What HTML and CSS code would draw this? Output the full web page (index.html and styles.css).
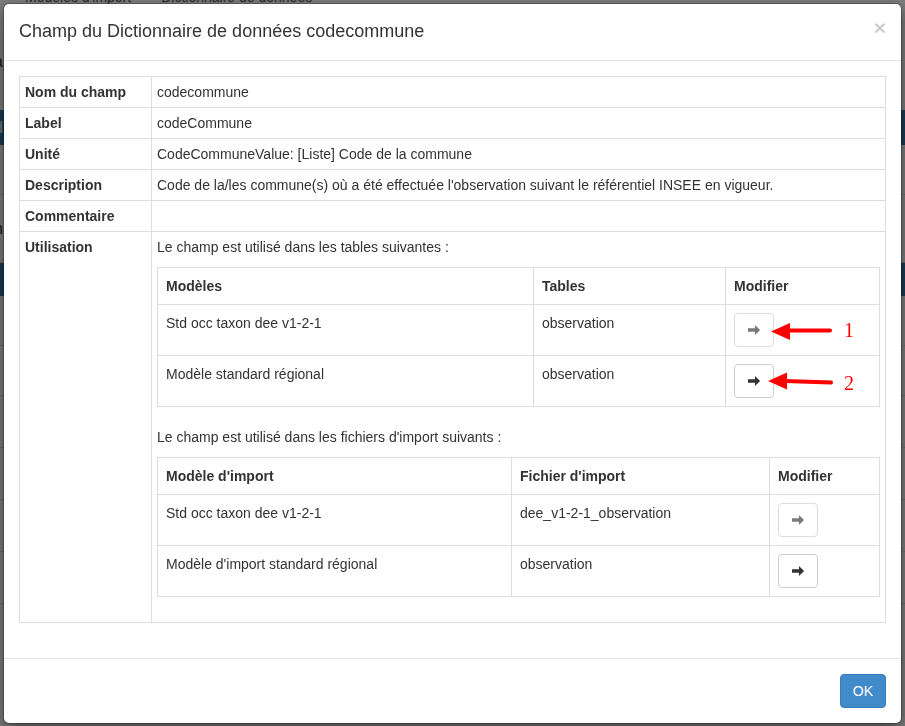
FILE: index.html
```html
<!DOCTYPE html>
<html lang="fr">
<head>
<meta charset="utf-8">
<title>Champ du Dictionnaire de données</title>
<link rel="stylesheet" href="styles.css">
</head>
<body>
<div class="page">
  <ul class="tabs">
    <li>Modèles d'import</li>
    <li>Dictionnaire de données</li>
  </ul>
  <div class="pg-row r1">a</div>
  <div class="pg-gap"></div>
  <div class="pg-bar">d</div>
  <div class="pg-row r2">/</div>
  <div class="pg-row r3">n</div>
  <div class="pg-bar b2"></div>
  <div class="pg-row r4"></div>
  <div class="pg-row r5"></div>
  <div class="pg-row r6">t</div>
  <div class="pg-row r7"></div>
  <div class="pg-row r7"></div>
  <div class="pg-row r7"></div>
</div>
<div class="backdrop"></div>

<div class="modal">
  <div class="modal-header">
    <span class="close">×</span>
    <h4 class="modal-title">Champ du Dictionnaire de données codecommune</h4>
  </div>
  <div class="modal-body">
    <table class="tbl tbl-main">
      <colgroup><col class="c-label"><col></colgroup>
      <tbody>
        <tr><th>Nom du champ</th><td>codecommune</td></tr>
        <tr><th>Label</th><td>codeCommune</td></tr>
        <tr><th>Unité</th><td>CodeCommuneValue: [Liste] Code de la commune</td></tr>
        <tr><th>Description</th><td>Code de la/les commune(s) où a été effectuée l'observation suivant le référentiel INSEE en vigueur.</td></tr>
        <tr><th>Commentaire</th><td></td></tr>
        <tr>
          <th>Utilisation</th>
          <td>
            <p class="intro">Le champ est utilisé dans les tables suivantes :</p>
            <table class="tbl tbl-sub">
              <colgroup><col class="c-m1"><col class="c-t1"><col></colgroup>
              <tbody>
                <tr class="head"><th>Modèles</th><th>Tables</th><th>Modifier</th></tr>
                <tr><td>Std occ taxon dee v1-2-1</td><td>observation</td><td><button class="btn" disabled><svg class="ico" viewBox="0 0 14 12"><path d="M0 4h7.5V0.5L13 6l-5.5 5.5V8H0z"/></svg></button></td></tr>
                <tr><td>Modèle standard régional</td><td>observation</td><td><button class="btn"><svg class="ico" viewBox="0 0 14 12"><path d="M0 4h7.5V0.5L13 6l-5.5 5.5V8H0z"/></svg></button></td></tr>
              </tbody>
            </table>
            <p class="intro">Le champ est utilisé dans les fichiers d'import suivants :</p>
            <table class="tbl tbl-sub">
              <colgroup><col class="c-m2"><col class="c-t2"><col></colgroup>
              <tbody>
                <tr class="head"><th>Modèle d'import</th><th>Fichier d'import</th><th>Modifier</th></tr>
                <tr><td>Std occ taxon dee v1-2-1</td><td>dee_v1-2-1_observation</td><td><button class="btn" disabled><svg class="ico" viewBox="0 0 14 12"><path d="M0 4h7.5V0.5L13 6l-5.5 5.5V8H0z"/></svg></button></td></tr>
                <tr><td>Modèle d'import standard régional</td><td>observation</td><td><button class="btn"><svg class="ico" viewBox="0 0 14 12"><path d="M0 4h7.5V0.5L13 6l-5.5 5.5V8H0z"/></svg></button></td></tr>
              </tbody>
            </table>
          </td>
        </tr>
      </tbody>
    </table>
  </div>
  <div class="modal-footer">
    <button class="btn-primary">OK</button>
  </div>
</div>

<svg class="annot" width="905" height="726" viewBox="0 0 905 726">
  <line x1="789" y1="330.5" x2="830" y2="330.5" stroke="#f00" stroke-width="4" stroke-linecap="round"/>
  <polygon points="771,331.5 790,323 790,340" fill="#f00"/>
  <line x1="785" y1="381" x2="831" y2="382.5" stroke="#f00" stroke-width="4" stroke-linecap="round"/>
  <polygon points="768,381 787,372.5 787,389.5" fill="#f00"/>
  <text x="844" y="337" class="num">1</text>
  <text x="844" y="390" class="num">2</text>
</svg>
</body>
</html>
```

FILE: styles.css
```css
* { box-sizing: border-box; }

html, body {
  margin: 0;
  padding: 0;
  width: 905px;
  height: 726px;
  overflow: hidden;
}

body {
  font-family: "Liberation Sans", Arial, sans-serif;
  font-size: 14px;
  line-height: 1.42857;
  color: #333;
  background: #fff;
}

/* background page (dimmed by the backdrop) */
.tabs {
  list-style: none;
  margin: -12px 0 0 0;
  padding: 0 0 0 25px;
  display: flex;
  gap: 30px;
  font-size: 14px;
  color: #555;
  height: 52px;
}
.pg-row {
  border-bottom: 1px solid #ddd;
  font-size: 16px;
  margin-left: -6px;
  color: #333;
}
.r1 { height: 40px; line-height: 44px; border-bottom: 0; }
.pg-gap { height: 30px; }
.pg-bar {
  height: 35px;
  background: #337ab7;
  color: #fff;
  font-size: 16px;
  line-height: 35px;
  margin-left: -6px;
}
.r2 { height: 50px; line-height: 54px; }
.r3 { height: 68px; line-height: 68px; }
.b2 { height: 33px; }
.r4 { height: 50px; }
.r5 { height: 50px; }
.r6 { height: 52px; line-height: 34px; }
.r7 { height: 52px; }

.backdrop {
  position: fixed;
  inset: 0;
  background: rgba(0, 0, 0, 0.5);
}

/* modal */
.modal {
  position: absolute;
  left: 3px;
  top: 3px;
  width: 899px;
  background: #fff;
  border: 1px solid rgba(0, 0, 0, 0.2);
  border-radius: 6px;
  box-shadow: 0 5px 15px rgba(0, 0, 0, 0.5);
  background-clip: padding-box;
}

.modal-header {
  padding: 15px;
  border-bottom: 1px solid #e5e5e5;
}
.modal-title {
  margin: 0;
  font-size: 18px;
  font-weight: normal;
  line-height: 1.42857;
  color: #333;
}
.close {
  float: right;
  font-size: 21px;
  font-weight: bold;
  line-height: 1;
  color: #000;
  opacity: 0.2;
  margin-top: -2px;
}

.modal-body {
  padding: 15px;
}

.tbl {
  width: 100%;
  border-collapse: collapse;
  border-spacing: 0;
  table-layout: fixed;
  margin-bottom: 20px;
}
.tbl th, .tbl td {
  border: 1px solid #ddd;
  text-align: left;
  vertical-align: top;
  line-height: 20px;
}
.tbl-main > tbody > tr > th,
.tbl-main > tbody > tr > td {
  padding: 5px;
}
.tbl-main > tbody > tr > th { font-weight: bold; }
.c-label { width: 132px; }

.intro { margin: 0 0 10px; }

.tbl-sub th, .tbl-sub td { padding: 8px; }
.c-m1 { width: 376px; }
.c-t1 { width: 192px; }
.c-m2 { width: 354px; }
.c-t2 { width: 258px; }

.btn {
  display: inline-flex;
  align-items: center;
  justify-content: center;
  width: 40px;
  height: 34px;
  padding: 0;
  background: #fff;
  border: 1px solid #ccc;
  border-radius: 4px;
  color: #333;
  cursor: pointer;
  vertical-align: top;
}
.btn[disabled] { opacity: 0.65; cursor: not-allowed; }
.ico { width: 13px; height: 12px; fill: #333; display: block; }

.modal-footer {
  padding: 15px;
  border-top: 1px solid #e5e5e5;
  display: flex;
  justify-content: flex-end;
}
.btn-primary {
  font-family: "Liberation Sans", Arial, sans-serif;
  font-size: 14px;
  line-height: 20px;
  height: 34px;
  padding: 6px 12px;
  color: #fff;
  background: #428bca;
  border: 1px solid #357ebd;
  border-radius: 4px;
}

.annot {
  position: absolute;
  left: 0;
  top: 0;
  pointer-events: none;
}
.num {
  font-family: "Liberation Serif", "Times New Roman", serif;
  font-size: 20px;
  fill: #f00;
}
```
